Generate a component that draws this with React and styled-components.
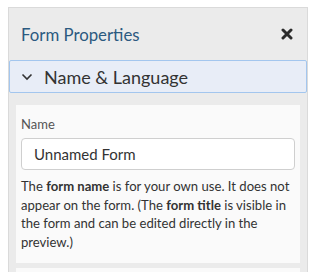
import React from 'react'
import styled, { createGlobalStyle } from 'styled-components'

const GlobalStyle = createGlobalStyle`
  html, body {
    margin: 0;
    padding: 0;
    background: #ffffff;
    font-family: Lato, "Open Sans", sans-serif;
  }
`

const Panel = styled.div`
  box-sizing: border-box;
  width: 300px;
  height: calc(100vh - 7px);
  margin: 7px 0 0 8px;
  background: #ebebeb;
  border: 1px solid #dadada;
  border-bottom: none;
  overflow: hidden;
`

const Header = styled.div`
  display: flex;
  align-items: center;
  justify-content: space-between;
  height: 52px;
  padding: 0 12px 0 12px;
`

const Title = styled.h2`
  margin: 0;
  font-size: 16.8px;
  font-weight: 400;
  color: #2b5a80;
`

const CloseButton = styled.button`
  display: flex;
  align-items: center;
  justify-content: center;
  width: 16px;
  height: 16px;
  padding: 0;
  border: none;
  background: none;
  cursor: pointer;
`

const SectionHeader = styled.div`
  display: flex;
  align-items: center;
  gap: 11px;
  height: 31px;
  padding: 0 11px;
  background: #e8edf7;
  border: 1px solid #a3c6ee;
  border-radius: 2px;
  font-size: 18px;
  color: #333;
`

const SectionBody = styled.div`
  margin: 12px 7px 0 7px;
  padding: 11px 5px 12px 5px;
  background: #fafafa;
`

const Label = styled.label`
  display: block;
  font-size: 13px;
  line-height: 16px;
  color: #555;
  margin-bottom: 6px;
`

const Input = styled.input`
  box-sizing: border-box;
  width: 100%;
  height: 32px;
  padding: 0 12px;
  border: 1px solid #cfcfcf;
  border-radius: 4px;
  background: #fff;
  font-family: inherit;
  font-size: 15px;
  color: #333;
  outline: none;
`

const Help = styled.p`
  margin: 7px 0 0 0;
  font-size: 13.1px;
  line-height: 18.5px;
  color: #333;

  b {
    font-weight: 700;
  }
`

const NextSection = styled.div`
  margin: 5px 7px 0 7px;
  height: 20px;
  background: #fafafa;
`

export default function App() {
  return (
    <>
      <GlobalStyle />
      <Panel>
        <Header>
          <Title>Form Properties</Title>
          <CloseButton aria-label="close">
            <svg width="12" height="12" viewBox="0 0 12 12">
              <path d="M2 2 L10 10 M10 2 L2 10" stroke="#2b2b2b" strokeWidth="3" strokeLinecap="round" />
            </svg>
          </CloseButton>
        </Header>
        <SectionHeader>
          <svg width="12" height="8" viewBox="0 0 12 8">
            <path d="M1.5 1.5 L6 6 L10.5 1.5" stroke="#333" strokeWidth="1.6" fill="none" />
          </svg>
          <span>Name &amp; Language</span>
        </SectionHeader>
        <SectionBody>
          <Label>Name</Label>
          <Input defaultValue="Unnamed Form" />
          <Help>
            The <b>form name</b> is for your own use. It does not appear on the form. (The <b>form title</b> is visible in the form and can be edited directly in the preview.)
          </Help>
        </SectionBody>
        <NextSection />
      </Panel>
    </>
  )
}
